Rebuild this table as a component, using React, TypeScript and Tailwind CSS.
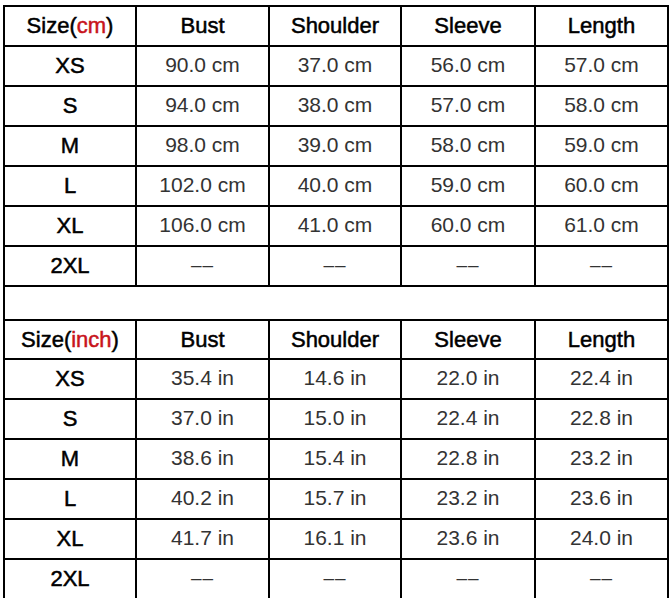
import React from "react";

const cmRows = [
  ["XS", "90.0 cm", "37.0 cm", "56.0 cm", "57.0 cm"],
  ["S", "94.0 cm", "38.0 cm", "57.0 cm", "58.0 cm"],
  ["M", "98.0 cm", "39.0 cm", "58.0 cm", "59.0 cm"],
  ["L", "102.0 cm", "40.0 cm", "59.0 cm", "60.0 cm"],
  ["XL", "106.0 cm", "41.0 cm", "60.0 cm", "61.0 cm"],
  ["2XL", "--", "--", "--", "--"],
];

const inRows = [
  ["XS", "35.4 in", "14.6 in", "22.0 in", "22.4 in"],
  ["S", "37.0 in", "15.0 in", "22.4 in", "22.8 in"],
  ["M", "38.6 in", "15.4 in", "22.8 in", "23.2 in"],
  ["L", "40.2 in", "15.7 in", "23.2 in", "23.6 in"],
  ["XL", "41.7 in", "16.1 in", "23.6 in", "24.0 in"],
  ["2XL", "--", "--", "--", "--"],
];

const strong = "text-[22px] text-black [-webkit-text-stroke:0.5px_#000]";

function Header({ unit }: { unit: string }) {
  const cells = ["Bust", "Shoulder", "Sleeve", "Length"];
  return (
    <>
      <div className={"bg-white flex items-center justify-center " + strong}>
        <span>
          Size(<span className="text-[#c8141c] [-webkit-text-stroke:0.5px_#c8141c]">{unit}</span>)
        </span>
      </div>
      {cells.map((c) => (
        <div key={c} className={"bg-white flex items-center justify-center " + strong}>
          {c}
        </div>
      ))}
    </>
  );
}

function Rows({ rows }: { rows: string[][] }) {
  return (
    <>
      {rows.map((r) =>
        r.map((c, i) => (
          <div
            key={r[0] + i}
            className={
              "bg-white flex items-center justify-center " +
              (i === 0 ? strong : "text-[21px] text-[#333] pb-[3px]")
            }
          >
            {c === "--" ? <span className="tracking-[1px] text-[19px] text-[#333]">––</span> : c}
          </div>
        ))
      )}
    </>
  );
}

export default function App() {
  return (
    <div
      className="w-[670px] h-[598px] bg-white pt-[5px] pl-[3px] overflow-hidden"
      style={{ fontFamily: '"Liberation Sans", Arial, sans-serif' }}
    >
      <div className="w-[666px] h-[593px] bg-black p-[2px] grid grid-cols-[130px_131px_130px_132px_131px] grid-rows-[38px_38px_38px_38px_38px_38px_38px_32px_37px_38px_38px_38px_38px_38px_38px] gap-[2px] leading-none">
        <Header unit="cm" />
        <Rows rows={cmRows} />
        <div className="bg-white col-span-5" />
        <Header unit="inch" />
        <Rows rows={inRows} />
      </div>
    </div>
  );
}
